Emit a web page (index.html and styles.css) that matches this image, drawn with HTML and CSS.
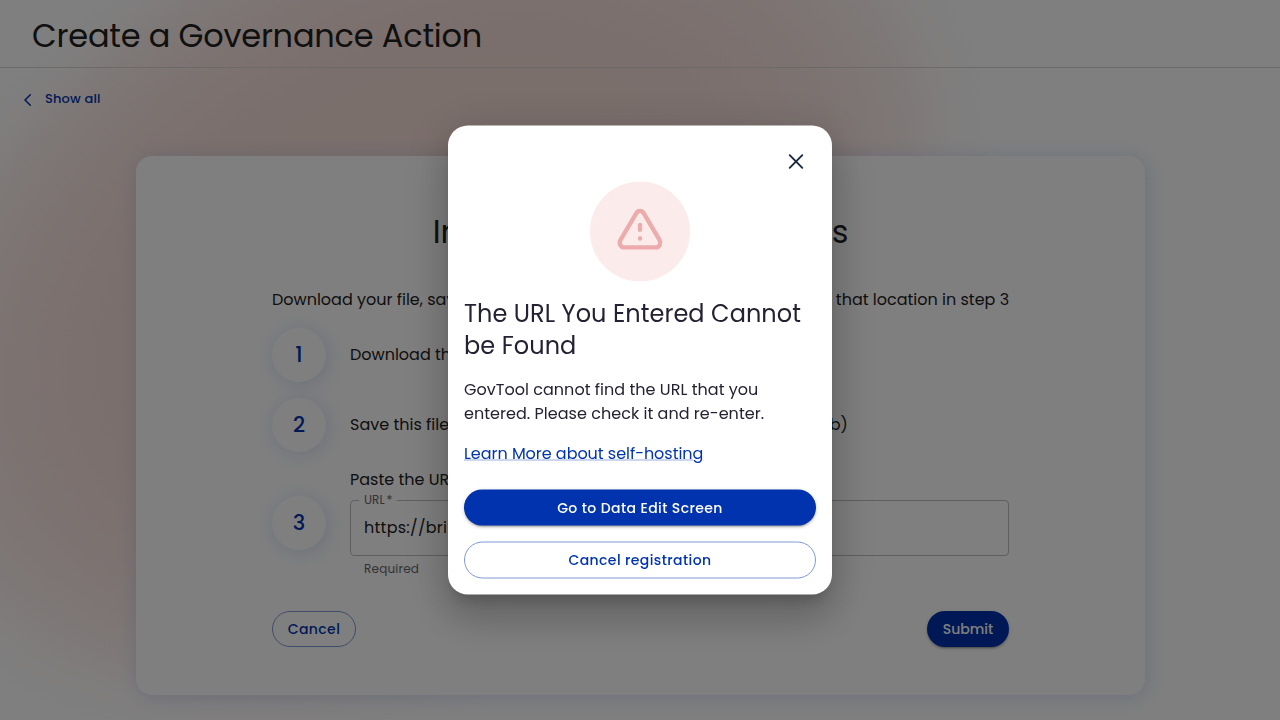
FILE: index.html
```html
<!DOCTYPE html>
<html lang="en">
<head>
<meta charset="utf-8">
<title>Create a Governance Action</title>
<link rel="stylesheet" href="styles.css">
</head>
<body>
<div class="page">
  <header class="header"><h1 class="page-title">Create a Governance Action</h1></header>
  <a class="back">
    <svg class="back-icon" width="8" height="12" viewBox="0 0 8 12" fill="none" stroke="currentColor" stroke-width="1.5" stroke-linecap="round" stroke-linejoin="round"><path d="M6.300 .8 1 6l5.300 5.200"/></svg>
    <span class="back-text">Show all</span>
  </a>
  <main class="card">
    <h2 class="card-title">Information Storage Steps</h2>
    <p class="intro">Download your file, save <span class="intro-middle">it to your chosen location, and enter the URL of</span> that location in step 3</p>
    <div class="steps">
      <div class="step"><div class="number">1</div><p class="step-text">Download this file</p></div>
      <div class="step"><div class="number">2</div><p class="step-text">Save this file <span class="save-middle">in a location that provides a public URL (ex. git</span>hub)</p></div>
      <div class="step">
        <div class="number">3</div>
        <div class="field">
          <p class="step-text">Paste the URL here</p>
          <div class="input"><span class="label">URL<span class="star">*</span></span><span class="value">https://bring.example</span></div>
          <p class="helper">Required</p>
        </div>
      </div>
    </div>
    <div class="actions">
      <button class="btn outlined cancel">Cancel</button>
      <button class="btn filled submit">Submit</button>
    </div>
  </main>
</div>
<div class="overlay">
  <section class="modal">
    <div class="close-row">
      <svg width="16" height="16" viewBox="0 0 16 16" fill="none" stroke="#1b2a40" stroke-width="1.900" stroke-linecap="round"><path d="M1.700 1.700 14.300 14.300M14.300 1.700 1.700 14.300"/></svg>
    </div>
    <svg class="warning" width="100" height="100" viewBox="0 0 100 100" fill="none">
      <circle cx="50" cy="50" r="50" fill="#fcebeb"/>
      <path d="M46.200 31.800 30.400 58.600C28.600 61.800 30.500 65.900 34.400 65.900H65.600C69.500 65.900 71.400 61.800 69.600 58.600L53.800 31.800C52 28.700 48 28.700 46.200 31.800Z" stroke="#edacac" stroke-width="4.300" stroke-linejoin="round"/>
      <path d="M50 43.400V48.200M50 56.800V57" stroke="#edacac" stroke-width="4.400" stroke-linecap="round"/>
    </svg>
    <h2 class="modal-title">The URL You Entered Cannot be Found</h2>
    <p class="modal-text">GovTool cannot find the URL that you entered. Please check it and re-enter.</p>
    <a class="link">Learn More about self-hosting</a>
    <button class="btn filled go">Go to Data Edit Screen</button>
    <button class="btn outlined leave">Cancel registration</button>
  </section>
</div>
</body>
</html>
```
FILE: styles.css
```css
* { box-sizing: border-box; }
body, h1, h2, p { margin: 0; }
body {
  font-family: Poppins, Inter, sans-serif;
  font-size: 16px;
  line-height: 24px;
  color: #242232;
  overflow: hidden;
}
.page {
  position: relative;
  z-index: 0;
  height: 720px;
  overflow: hidden;
  display: flex;
  flex-direction: column;
  color: #212121;
  background: #fff;
}
.page::before {
  content: "";
  position: absolute;
  z-index: -1;
  width: 1240px;
  height: 840px;
  left: -200px;
  top: -140px;
  transform: rotate(-28deg);
  background: radial-gradient(closest-side, #f6dcd6 0, #f7dfda 55%, #f9e5e2 70%, #fbefed 82%, rgba(255,251,250,.8) 92%, rgba(255,255,255,0) 100%);
}
.header {
  height: 68px;
  padding: 12px 32px 0;
  border-bottom: 1px solid #d6d2d5;
}
.page-title { font-size: 32px; line-height: 48px; font-weight: 400; letter-spacing: -.2px; white-space: nowrap; }
.back {
  display: flex;
  align-items: center;
  gap: 13px;
  height: 24px;
  margin: 19px 0 0 24px;
  color: #0033ad;
  font-size: 13px;
  font-weight: 500;
  letter-spacing: .15px;
}
.back-icon { margin-top: 2px; }
.card {
  width: 1009px;
  height: 539px;
  margin: 45px 0 0 136px;
  padding: 52px 136px 48px;
  background: #fff;
  border-radius: 16px;
  box-shadow: 2px 2px 20px rgba(47, 98, 220, .2);
}
.card-title { text-align: center; font-size: 32px; line-height: 48px; font-weight: 400; letter-spacing: -.1px; }
.intro { margin-top: 32px; white-space: nowrap; }
.intro-middle { letter-spacing: -.15px; }
.save-middle { letter-spacing: -.22px; }
.steps { display: flex; flex-direction: column; gap: 16px; margin-top: 16px; }
.step { display: flex; align-items: center; gap: 24px; }
.number {
  width: 54px;
  height: 54px;
  border-radius: 50%;
  flex: none;
  display: flex;
  align-items: center;
  justify-content: center;
  color: #0033ad;
  font-size: 21px;
  font-weight: 500;
  box-shadow: 2px 2px 20px rgba(47, 98, 220, .2);
}
.step-text { white-space: nowrap; }
.field { flex: 1; height: 110px; }
.input {
  position: relative;
  height: 56px;
  margin-top: 8px;
  padding: 0 13px;
  border: 1px solid #bfbfbf;
  border-radius: 4px;
  display: flex;
  align-items: center;
}
.value { letter-spacing: .26px; }
.label {
  position: absolute;
  top: -9px;
  left: 8px;
  padding: 0 5px;
  background: #fff;
  color: #666;
  font-size: 12px;
  line-height: 16px;
}
.star { margin-left: 2px; }
.helper { margin: 3px 14px 0; font-size: 12px; line-height: 20px; color: #666; letter-spacing: .2px; }
.actions { display: flex; justify-content: space-between; margin-top: 33px; }
.btn {
  height: 36px;
  padding: 0;
  border: 0;
  border-radius: 50px;
  font: inherit;
  font-size: 14px;
  font-weight: 500;
  letter-spacing: .4px;
  white-space: nowrap;
}
.filled {
  color: #fff;
  background: #0033ad;
  box-shadow: 0 3px 1px -2px rgba(0,0,0,.2), 0 2px 2px rgba(0,0,0,.14), 0 1px 5px rgba(0,0,0,.12);
}
.outlined { color: #0033ad; background: transparent; border: 1px solid #8099d6; }
.cancel { width: 84px; }
.submit { width: 82px; letter-spacing: 0; }
.overlay {
  position: fixed;
  inset: 0;
  padding-top: 125px;
  display: flex;
  align-items: flex-start;
  justify-content: center;
  background: rgba(0,0,0,.5);
}
.modal {
  width: 384px;
  height: 469px;
  padding: 16px;
  display: flex;
  flex-direction: column;
  background: #fff;
  border-radius: 20px;
  box-shadow: 0 11px 15px -7px rgba(0,0,0,.2), 0 24px 38px 3px rgba(0,0,0,.14), 0 9px 46px 8px rgba(0,0,0,.12);
  transform: translateY(.5px);
}
.close-row { height: 40px; padding: 12px 12px 0; display: flex; justify-content: flex-end; }
.warning { align-self: center; flex: none; }
.modal-title { margin-top: 16px; font-size: 24px; line-height: 32px; font-weight: 400; letter-spacing: .05px; }
.modal-text { margin-top: 16px; letter-spacing: .03px; }
.link {
  align-self: flex-start;
  margin-top: 16px;
  color: #0033ad;
  letter-spacing: -.04px;
  text-decoration: underline;
  text-decoration-color: rgba(0,51,173,.4);
  text-decoration-thickness: 1px;
  white-space: nowrap;
}
.go { margin-top: 24px; flex: none; }
.leave { margin-top: 16px; height: 37px; padding-bottom: 1px; flex: none; }
```
